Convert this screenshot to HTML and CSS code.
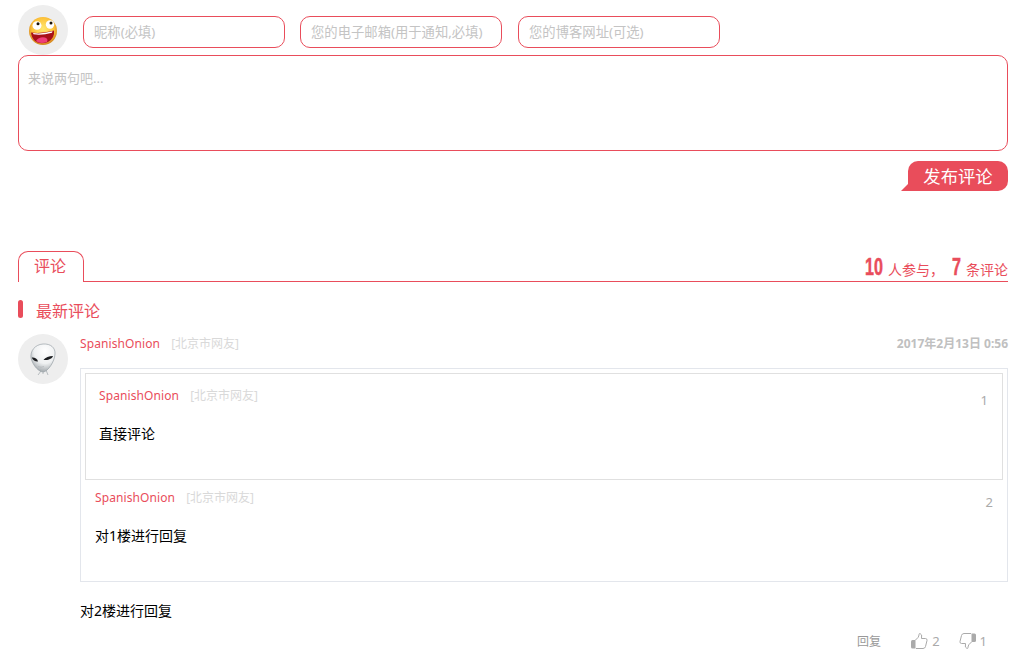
FILE: index.html
```html
<!DOCTYPE html>
<html lang="zh">
<head>
<meta charset="utf-8">
<title>评论</title>
<link rel="stylesheet" href="styles.css">
</head>
<body>
<div class="page">
  <form class="editor">
    <div class="fields">
      <div class="avatar">
        <svg width="30" height="30" viewBox="0 0 30 30">
          <defs>
            <radialGradient id="face" cx="50%" cy="42%" r="55%"><stop offset="0" stop-color="#ffe870"/><stop offset=".72" stop-color="#fdc23a"/><stop offset="1" stop-color="#d88a22"/></radialGradient>
          </defs>
          <circle cx="15" cy="16" r="14" fill="url(#face)"/>
          <ellipse cx="9" cy="10.500" rx="4.500" ry="4.300" fill="#fff"/>
          <ellipse cx="22" cy="9.500" rx="4.200" ry="4.200" fill="#fff"/>
          <circle cx="10" cy="8.800" r="1.500" fill="#1c1206"/>
          <circle cx="23" cy="8" r="1.500" fill="#1c1206"/>
          <path d="M3 17.500 Q14 19 26 15.500 Q27 23 20 27 Q12 30 7 26 Q3.500 23 3 17.500Z" fill="#a81019"/>
          <path d="M5 18 Q14 19.300 24.500 16.300 L24 17.800 Q14 20.500 5.500 19.300Z" fill="#fff"/>
          <path d="M8 26 Q11 21.500 17 22.500 Q20.500 23.500 19 27 Q12 29.500 8 26Z" fill="#ee3f78"/>
        </svg>
      </div>
      <input class="field" type="text" placeholder="昵称(必填)">
      <input class="field" type="text" placeholder="您的电子邮箱(用于通知,必填)">
      <input class="field" type="text" placeholder="您的博客网址(可选)">
    </div>
    <textarea class="message" placeholder="来说两句吧..."></textarea>
    <div class="submit-row"><button class="submit" type="button">发布评论</button></div>
  </form>

  <div class="tabs">
    <div class="tab">评论</div>
    <div class="stats"><b class="count"><span class="digits">10</span></b><span class="label">人参与，</span><b class="count count-single"><span class="digits">7</span></b><span class="label">条评论</span></div>
  </div>

  <h3 class="section">最新评论</h3>

  <div class="comment">
    <div class="avatar">
      <svg width="30" height="36" viewBox="0 0 30 36">
        <defs>
          <radialGradient id="alien" cx="58%" cy="25%" r="75%"><stop offset="0" stop-color="#fff"/><stop offset=".6" stop-color="#eef0f1"/><stop offset="1" stop-color="#a3a9ad"/></radialGradient>
        </defs>
        <path d="M13 30 L10 34 M15 31 L15 33 M18 29 L20 34" stroke="#a8aeb2" stroke-width=".8" fill="none"/>
        <path d="M15 3 C23 2.500 27.500 7 27 13 C26.500 21 20 30 15.500 31 C11 31 5 25 3 17 C2 10 7 3.500 15 3Z" fill="url(#alien)" stroke="#9aa2a8" stroke-width=".7"/>
        <path d="M3.800 16.500 C6 16 9.500 17.500 10 20.500 C8 21 4.800 19.500 3.800 16.500Z" fill="#1b1d20"/>
        <path d="M15.500 18.800 C17.500 16.300 21 15 25 15 C24.500 17.500 19.500 20 15.500 18.800Z" fill="#1b1d20"/>
        <path d="M10 25.500 Q13 27 16 25.500" stroke="#b0b5b9" stroke-width=".7" fill="none"/>
      </svg>
    </div>
    <div class="body">
      <div class="meta">
        <span class="name">SpanishOnion</span><span class="place">[北京市网友]</span>
        <time class="date">2017年2月13日 0:56</time>
      </div>
      <div class="quote">
        <div class="floor floor-boxed">
          <div class="meta"><span class="name">SpanishOnion</span><span class="place">[北京市网友]</span><span class="num">1</span></div>
          <p class="text">直接评论</p>
        </div>
        <div class="floor">
          <div class="meta"><span class="name">SpanishOnion</span><span class="place">[北京市网友]</span><span class="num">2</span></div>
          <p class="text">对1楼进行回复</p>
        </div>
      </div>
      <p class="reply-text">对2楼进行回复</p>
      <div class="actions">
        <span class="reply">回复</span>
        <span class="vote">
          <svg width="17" height="16" viewBox="0 0 17 16"><path d="M4.500 7 L7 4.500 Q8 3 8 1.500 Q8 .5 9 .5 Q11.500 1 10.500 5.500 L14.500 5.500 Q16.500 5.800 16 7.500 L14.500 13.500 Q14 15.500 12 15.500 L5 15.500" fill="none" stroke="#aaa" stroke-width="1"/><path d="M0 8.500 Q0 7 1.500 7 L4.500 7 L4.500 15.500 L1.500 15.500 Q0 15.500 0 14Z" fill="#aaa"/></svg>
          2
        </span>
        <span class="vote vote-down">
          <svg width="17" height="16" viewBox="0 0 17 16"><path d="M12.500 9 L10 11.500 Q9 13 9 14.500 Q9 15.500 8 15.500 Q5.500 15 6.500 10.500 L2.500 10.500 Q.5 10.200 1 8.500 L2.500 2.500 Q3 .5 5 .5 L12 .5" fill="none" stroke="#aaa" stroke-width="1"/><path d="M17 7.500 Q17 9 15.500 9 L12.500 9 L12.500 .5 L15.500 .5 Q17 .5 17 2Z" fill="#aaa"/></svg>
          1
        </span>
      </div>
    </div>
  </div>
</div>
</body>
</html>
```
FILE: styles.css
```css
* { box-sizing: border-box; }
html, body { margin: 0; height: 659px; overflow: hidden; background: #fff; }
body { font-family: "Noto Sans", "Noto Sans CJK SC", sans-serif; font-size: 14px; color: #000; }
.page { width: 990px; margin-left: 18px; padding-top: 5px; }

.fields { display: flex; align-items: flex-start; height: 50px; }
.avatar { width: 50px; height: 50px; flex: none; border-radius: 50%; background: #eee; display: flex; align-items: center; justify-content: center; }
.field {
  width: 202px; height: 32px; margin: 11px 0 0 15px; padding: 0 10px;
  border: 1px solid #e94d5b; border-radius: 10px; outline: none; background: #fff;
  font: 13.33px "Noto Sans", "Noto Sans CJK SC", sans-serif;
}
.field:nth-of-type(3) { margin-left: 16px; }
.field::placeholder, .message::placeholder { color: #c4c4c4; opacity: 1; }
.message {
  display: block; width: 990px; height: 96px; padding: 12px 9px; resize: none;
  border: 1px solid #e94d5b; border-radius: 10px; outline: none;
  font: 13px/20px "Noto Sans", "Noto Sans CJK SC", sans-serif;
}
.submit-row { display: flex; justify-content: flex-end; margin-top: 10px; }
.submit {
  position: relative; width: 100px; height: 30px; padding: 0; border: 0; border-radius: 10px 10px 10px 0;
  background: #e94d5b; color: #fff; font: 17.33px/30px "Noto Sans", "Noto Sans CJK SC", sans-serif;
}
.submit::before {
  content: ""; position: absolute; left: -7px; bottom: 0;
  border-style: solid; border-width: 0 0 7px 7px; border-color: transparent transparent #e94d5b transparent;
}

.tabs { display: flex; justify-content: space-between; align-items: flex-end; height: 31px; margin-top: 60px; border-bottom: 1px solid #e94d5b; }
.tab {
  width: 66px; height: 31px; margin-bottom: -1px; padding-right: 2px; border: 1px solid #e94d5b; border-bottom: 0; border-radius: 10px 10px 0 0;
  background: #fff; color: #e94d5b; font-size: 16px; line-height: 28px; text-align: center;
}
.stats { display: flex; align-items: baseline; color: #e94d5b; font-size: 14px; line-height: 20px; white-space: nowrap; }
.count { display: inline-block; width: 18px; margin-right: 5px; font: 700 23px/20px "Liberation Sans", sans-serif; }
.count-single { width: 9px; margin-left: 8px; margin-right: 5px; }
.digits { display: inline-block; transform: translateY(-1px) scaleX(.7); transform-origin: left center; -webkit-text-stroke: .5px #e94d5b; }
.label { transform: translateY(-1px); }

.section {
  margin: 18px 0 0; padding-left: 18px; height: 19px; position: relative;
  color: #e94d5b; font-size: 16px; font-weight: 400; line-height: 22px;
}
.section::before { content: ""; position: absolute; left: 0; top: 0; width: 5px; height: 18px; border-radius: 3px; background: #e94d5b; }

.comment { display: flex; gap: 12px; margin-top: 15px; }
.body { flex: 1; min-width: 0; }
.meta { display: flex; align-items: center; height: 20px; font-size: 12px; line-height: 20px; }
.name { color: #e94d5b; letter-spacing: .1px; }
.place { margin-left: 11px; color: #d9d9d9; }
.date { margin-left: auto; color: #c0c0c0; font-weight: 700; }
.num { margin-left: auto; margin-top: 8px; color: #aaa; font-size: 13px; }

.quote { margin-top: 14px; height: 214px; padding: 4px; border: 1px solid #e3e6ec; }
.floor { padding: 8px 10px 0; }
.floor-boxed { height: 107px; padding: 12px 14px 0 13px; border: 1px solid #e0e0e0; }
.text { margin: 18px 0 0; font-size: 14px; line-height: 20px; }
.reply-text { margin: 19px 0 0; font-size: 14px; line-height: 20px; }
.actions { display: flex; align-items: center; justify-content: flex-end; height: 20px; margin-top: 10px; padding-right: 21px; color: #aaa; font-size: 12px; }
.reply { color: #999; margin-right: 30px; }
.vote { display: flex; align-items: center; gap: 4px; font-size: 13px; }
.vote-down { margin-left: 19px; }
```
